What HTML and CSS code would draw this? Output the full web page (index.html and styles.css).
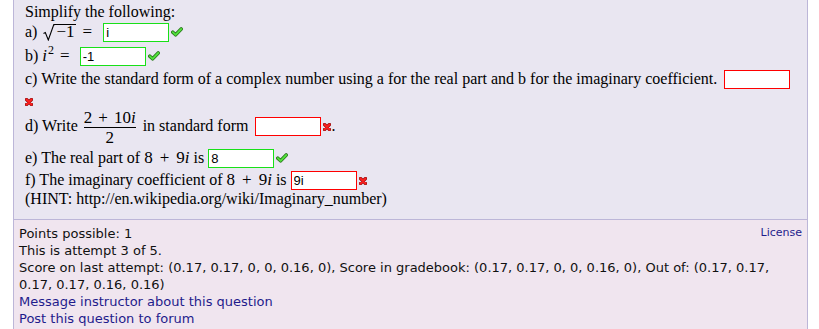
FILE: index.html
```html
<!DOCTYPE html>
<html>
<head>
<meta charset="utf-8">
<title>Question</title>
<link rel="stylesheet" href="styles.css">
</head>
<body>
<div class="question">
  <div class="row r-title"><p class="ln">Simplify the following:</p></div>
  <div class="row r-a"><p class="ln">a) <span class="m"><span class="sqrt"><svg class="rad" width="12" height="17" viewBox="0 0 12 17"><path d="M0.5 9.5 L2.3 8.6 L5.3 16 L10.8 0.6 L12 0.6" fill="none" stroke="#000" stroke-width="1.1"/></svg><span class="radicand">−1</span></span><span class="rel">=</span></span><input class="ans good gap-a" type="text" value="i" readonly><svg class="icon check" width="12" height="10" viewBox="0 0 12 10"><path d="M1.8 5.2 L4.6 7.8 L10.2 2" fill="none" stroke="#2c7a1f" stroke-width="3.6" stroke-linecap="round" stroke-linejoin="round"/><path d="M1.8 5.2 L4.6 7.8 L10.2 2" fill="none" stroke="#52e23c" stroke-width="1.8" stroke-linecap="round" stroke-linejoin="round"/></svg></p></div>
  <div class="row r-b"><p class="ln">b) <span class="m"><i>i</i><sup>2</sup><span class="rel rel-b">=</span></span><input class="ans good gap-b" type="text" value="-1" readonly><svg class="icon check" width="12" height="10" viewBox="0 0 12 10"><path d="M1.8 5.2 L4.6 7.8 L10.2 2" fill="none" stroke="#2c7a1f" stroke-width="3.6" stroke-linecap="round" stroke-linejoin="round"/><path d="M1.8 5.2 L4.6 7.8 L10.2 2" fill="none" stroke="#52e23c" stroke-width="1.8" stroke-linecap="round" stroke-linejoin="round"/></svg></p></div>
  <div class="row r-c"><p class="ln">c) Write the standard form of a complex number using a for the real part and b for the imaginary coefficient. <input class="ans bad gap-c" type="text" value="" readonly></p></div>
  <div class="row r-x"><p class="ln"><svg class="icon cross cross-solo" width="8" height="8" viewBox="0 0 8 8"><path d="M1.5 1.5 L6.5 6.5 M6.5 1.5 L1.5 6.5" fill="none" stroke="#9a1010" stroke-width="3.4" stroke-linecap="round"/><path d="M1.5 1.5 L6.5 6.5 M6.5 1.5 L1.5 6.5" fill="none" stroke="#ff2020" stroke-width="1.8" stroke-linecap="round"/></svg></p></div>
  <div class="row r-d"><p class="ln">d) Write <span class="m frac"><span class="num">2<span class="op">+</span>10<i>i</i></span><span class="den">2</span></span> in standard form <input class="ans bad gap-d" type="text" value="" readonly><svg class="icon cross" width="8" height="8" viewBox="0 0 8 8"><path d="M1.5 1.5 L6.5 6.5 M6.5 1.5 L1.5 6.5" fill="none" stroke="#9a1010" stroke-width="3.4" stroke-linecap="round"/><path d="M1.5 1.5 L6.5 6.5 M6.5 1.5 L1.5 6.5" fill="none" stroke="#ff2020" stroke-width="1.8" stroke-linecap="round"/></svg>.</p></div>
  <div class="row r-e"><p class="ln">e) The real part of <span class="m">8<span class="op">+</span>9<i>i</i></span> is <input class="ans good" type="text" value="8" readonly><svg class="icon check" width="12" height="10" viewBox="0 0 12 10"><path d="M1.8 5.2 L4.6 7.8 L10.2 2" fill="none" stroke="#2c7a1f" stroke-width="3.6" stroke-linecap="round" stroke-linejoin="round"/><path d="M1.8 5.2 L4.6 7.8 L10.2 2" fill="none" stroke="#52e23c" stroke-width="1.8" stroke-linecap="round" stroke-linejoin="round"/></svg></p></div>
  <div class="row r-f"><p class="ln">f) The imaginary coefficient of <span class="m">8<span class="op">+</span>9<i>i</i></span> is <input class="ans bad" type="text" value="9i" readonly><svg class="icon cross" width="8" height="8" viewBox="0 0 8 8"><path d="M1.5 1.5 L6.5 6.5 M6.5 1.5 L1.5 6.5" fill="none" stroke="#9a1010" stroke-width="3.4" stroke-linecap="round"/><path d="M1.5 1.5 L6.5 6.5 M6.5 1.5 L1.5 6.5" fill="none" stroke="#ff2020" stroke-width="1.8" stroke-linecap="round"/></svg></p></div>
  <div class="row r-h"><p class="ln">(HINT: http://en.wikipedia.org/wiki/Imaginary_number)</p></div>
</div>
<div class="info">
  <a class="license" href="#">License</a>
  <div>Points possible: 1</div>
  <div>This is attempt 3 of 5.</div>
  <div>Score on last attempt: (0.17, 0.17, 0, 0, 0.16, 0), Score in gradebook: (0.17, 0.17, 0, 0, 0.16, 0), Out of: (0.17, 0.17, 0.17, 0.17, 0.16, 0.16)</div>
  <div><a class="link" href="#">Message instructor about this question</a></div>
  <div><a class="link" href="#">Post this question to forum</a></div>
</div>
</body>
</html>
```

FILE: styles.css
```css
html, body {
  margin: 0;
  padding: 0;
  background: #ffffff;
}
body {
  font-family: "Liberation Serif", "Times New Roman", serif;
  font-size: 16px;
  color: #000;
}
.question {
  margin-left: 13px;
  width: 771px;
  padding: 2px 11px 9px 11px;
  background: #e9e6f1;
  border-left: 1px solid #bcb6d8;
  border-right: 1px solid #bcb6d8;
  border-bottom: 1px solid #bcb6d8;
}
.row {
  display: flex;
  align-items: center;
  white-space: nowrap;
}
.ln {
  margin: 0;
  line-height: normal;
}
.r-title { height: 20px; }
.r-a { height: 20px; }
.r-b { height: 28px; }
.r-c { height: 18px; }
.r-x { height: 25px; }
.r-d { height: 29px; }
.r-e { height: 31px; }
.r-f { height: 14px; }
.r-h { height: 23px; }

.m {
  font-family: "Liberation Serif", "Times New Roman", serif;
  font-size: 17px;
}
.m i { font-style: italic; }
.m sup {
  font-size: 12px;
  vertical-align: 7px;
  line-height: 0;
  margin-left: 1px;
}
.op { margin: 0 7px; }
.frac .op { margin: 0 6px; }
.rel { margin: 0 8px 0 7px; }
.rel-b { margin: 0 7px 0 6px; }
.sqrt {
  display: inline-block;
  white-space: nowrap;
  margin-left: 2px;
}
.rad {
  vertical-align: -4px;
}
.radicand {
  display: inline-block;
  border-top: 1px solid #000;
  line-height: 14px;
  padding: 0 1px 0 1px;
}
.frac {
  display: inline-flex;
  flex-direction: column;
  align-items: stretch;
  vertical-align: middle;
  margin: 0 3px 0 2px;
  text-align: center;
  line-height: 17px;
}
.num {
  border-bottom: 1px solid #000;
  padding: 0 0 1px 0;
}
.den {
  padding-top: 1px;
}

.ans {
  box-sizing: border-box;
  width: 66px;
  height: 19px;
  margin: 0;
  padding: 0 2px;
  font-family: "Liberation Sans", Arial, sans-serif;
  font-size: 13px;
  color: #000;
  background: #fff;
  vertical-align: baseline;
  outline: none;
}
.good { border: 1px solid #18e018; }
.bad { border: 1px solid #ff0000; }
.gap-a { margin-left: 3px; }
.gap-b { margin-left: 3px; }
.gap-c { margin-left: 3px; }
.gap-d { margin-left: 3px; }

.icon { vertical-align: 0; }
.check { margin-left: 2px; }
.cross { margin-left: 2px; }
.cross-solo { margin-left: 0; }

.info {
  margin-left: 13px;
  width: 783px;
  padding: 5px 5px 12px 5px;
  background: #f0e5ef;
  border-left: 1px solid #bcb6d8;
  border-right: 1px solid #bcb6d8;
  font-family: "DejaVu Sans", Verdana, sans-serif;
  font-size: 13px;
  line-height: 17px;
  color: #111;
}
.license {
  float: right;
  font-size: 11px;
  line-height: 15px;
  color: #1f1c8c;
  text-decoration: none;
}
.link {
  color: #1f1c8c;
  text-decoration: none;
}
```
